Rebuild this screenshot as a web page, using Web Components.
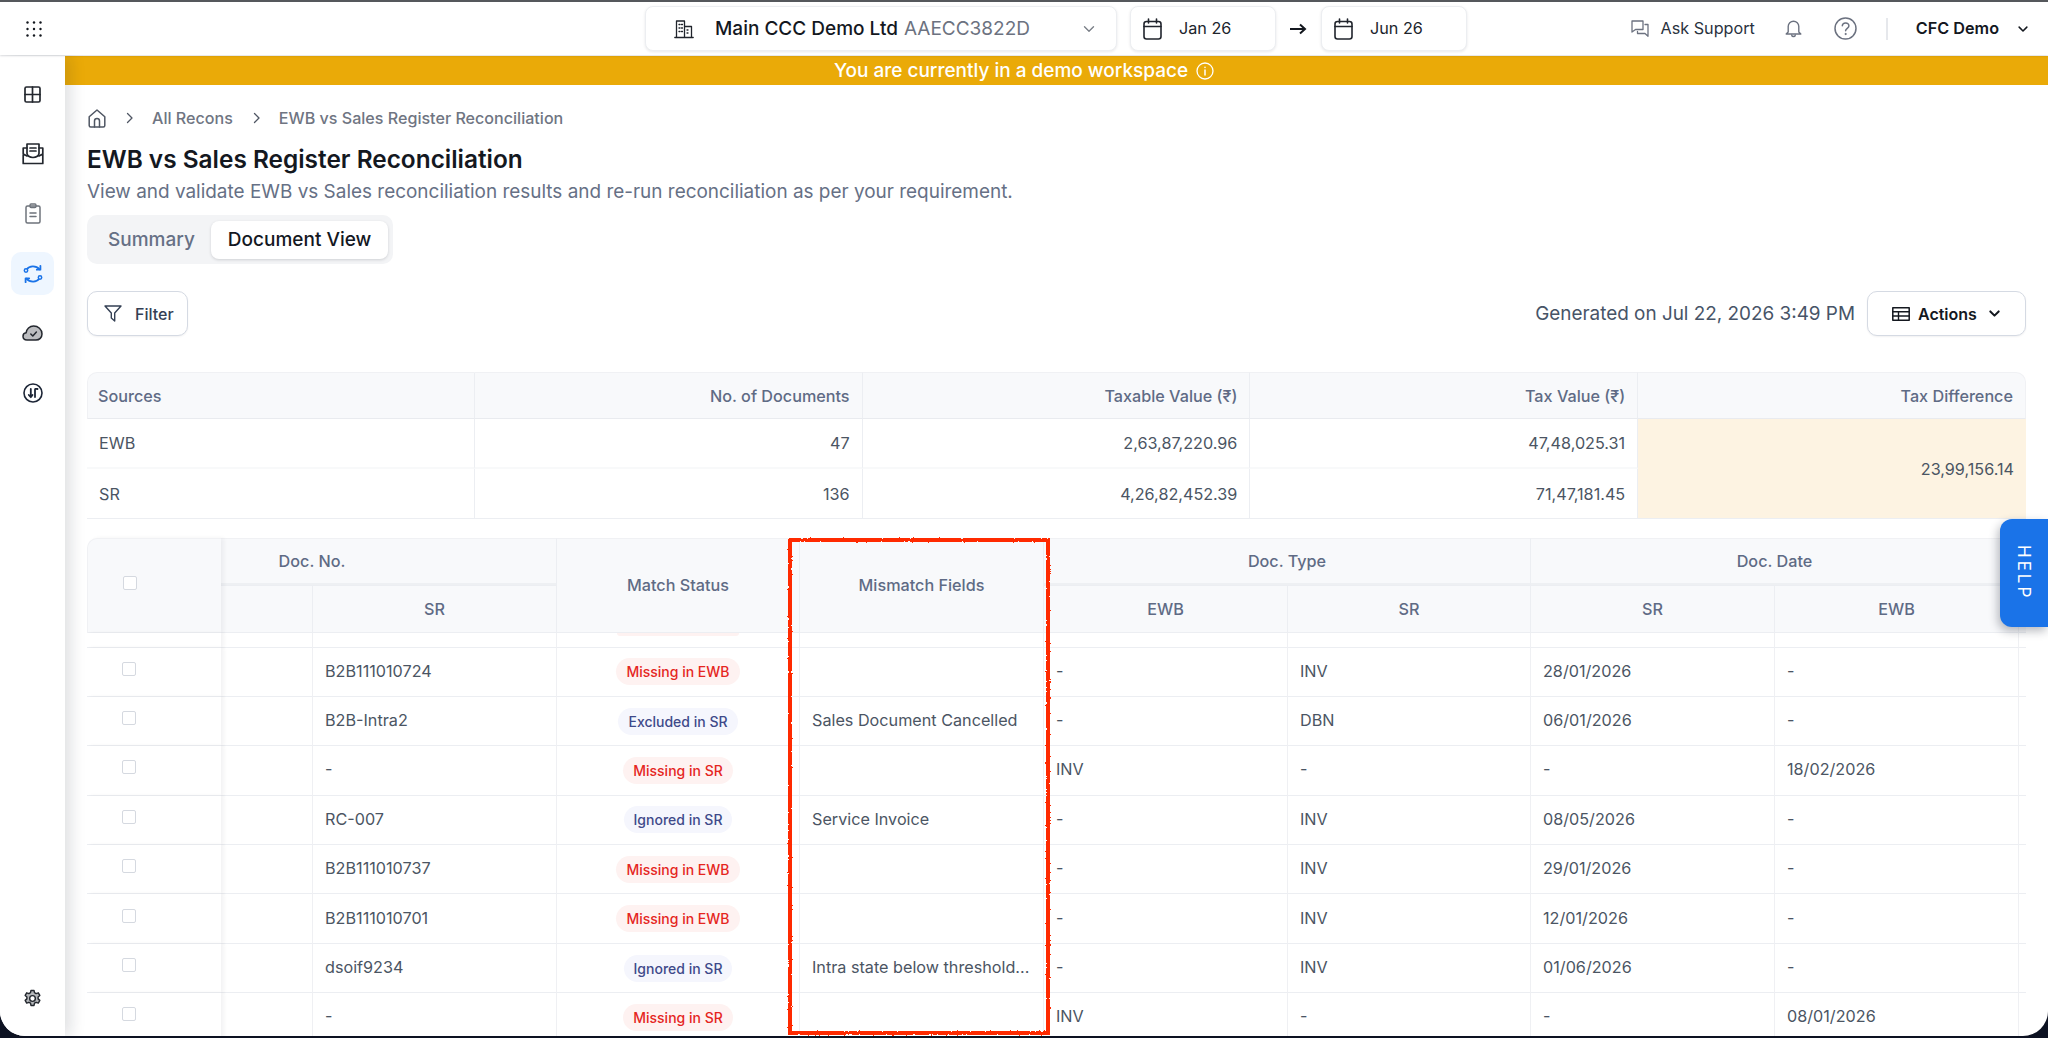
<!DOCTYPE html>
<html>
<head>
<meta charset="utf-8">
<title>EWB vs Sales Register Reconciliation</title>
<style>
  html, body { margin: 0; height: 100%; overflow: hidden; background: #0d1222; }
  body { font-family: Inter, "Liberation Sans", sans-serif; }
</style>
</head>
<body>
<app-shell>
  <top-bar slot="top"></top-bar>
  <side-nav slot="side"></side-nav>
  <demo-banner>You are currently in a demo workspace</demo-banner>
  <page-head></page-head>
  <tool-bar></tool-bar>
  <summary-table></summary-table>
  <recon-table></recon-table>
</app-shell>
<help-tab>HELP</help-tab>
<mark-box></mark-box>

<script>
const svg = (w, h, vb, body) =>
  `<svg width="${w}" height="${h}" viewBox="${vb}" fill="none" stroke="currentColor" stroke-linecap="round" stroke-linejoin="round">${body}</svg>`

const icons = {
  chevron: (w = 14, sw = 1.6) => svg(w, w, '0 0 14 14', `<path d="M2.5 4.8 7 9.3l4.5-4.5" stroke-width="${sw}"/>`),
  calendar: svg(19, 22, '0 0 19 22', '<rect x="1" y="3.5" width="17" height="17.5" rx="2.5" stroke-width="1.6"/><path d="M1 8.5h17M5.5 1v4M13.5 1v4" stroke-width="1.6"/>'),
  building: svg(20, 20, '0 0 20 20', '<path d="M2.5 18V2h8v16M10.5 7.5h7V18M.8 18.5h18.4" stroke-width="1.3"/><path d="M5 5.5h1M7.5 5.5h1M5 9h1M7.5 9h1M5 12.5h1M7.5 12.5h1M13 11h1M13 14h1" stroke-width="1.3"/>'),
  grid: svg(17, 17, '0 0 17 17', '<rect x="1" y="1" width="15" height="15" rx="1.5" stroke-width="1.7"/><path d="M8.500 1v15M1 8.500h15" stroke-width="1.700"/>'),
  inbox: svg(22, 22, '0 0 22 22', '<path d="M5 1h12v9.500c0 2-2.500 4-6 4s-6-2-6-4z" stroke-width="1.700"/><path d="M5 5H1.200v15.500h19.600V5H17M1.200 11 5 13M20.800 11 17 13M8 5h6M8 8h6" stroke-width="1.700"/>'),
  clipboard: svg(16, 21, '0 0 16 21', '<rect x="1" y="3" width="14" height="17" rx="1.500" stroke-width="1.500"/><rect x="5" y="1" width="6" height="3.500" rx="1" stroke-width="1.300"/><path d="M5 10h6M5 13.500h6" stroke-width="1.500"/>'),
  sync: svg(20, 20, '0 0 20 20', '<path d="M3.500 5.500C6.500 1.600 12.800 1.200 16.600 5.400M16.500 14.500C13.500 18.400 7.200 18.800 3.400 14.600" stroke-width="1.800"/><path d="M17.400 1.800v3.900h-3.600M2.600 18.200v-3.900h3.600" stroke-width="1.800"/><circle cx="3" cy="6.500" r="1.700" stroke-width="1.500" fill="#eef6ff"/><circle cx="17" cy="13.500" r="1.700" stroke-width="1.500" fill="#eef6ff"/>'),
  cloud: svg(21, 16, '0 0 21 16', '<path d="M5 15C2.600 15 1 13.400 1 11.300 1 9.400 2.400 8 4.100 7.800 4.500 4 7.600 1 11.600 1c4.500 0 8.400 3.400 8.400 8 0 3.600-2.700 6-6 6z" fill="#bcbdc0" stroke-width="1.500"/><path d="m8.800 9 2 2 3.600-4" stroke-width="1.500"/>'),
  arrowsCircle: svg(20, 20, '0 0 20 20', '<circle cx="10" cy="10" r="9" stroke-width="1.600"/><path d="M7.800 6v8M5.800 12l2 2.200L9.500 12M12 14V6.500c0-.5.500-.8 2.500-.5" stroke-width="1.800"/>'),
  gear: svg(19, 19, '0 0 20 20', '<path d="M8.400 1.500h3.200l.5 2.400 1.700.9 2.300-.8 1.600 2.800-1.800 1.600v2l1.800 1.600-1.600 2.800-2.300-.8-1.700.9-.5 2.400H8.400l-.5-2.400-1.700-.9-2.300.8-1.600-2.800 1.800-1.600v-2L2.300 6.800l1.600-2.800 2.300.8 1.700-.9z" fill="#b5b7ba" stroke-width="1.500"/><circle cx="10" cy="10" r="3" fill="#fff" stroke-width="1.500"/>'),
  chat: svg(18, 17, '0 0 18 17', '<path d="M1 1h11v8.500H4.500L1 12z" stroke-width="1.300"/><path d="M14 4.500h3v11.800l-3-2.800H6.500v-2" stroke-width="1.300"/>'),
  bell: svg(17, 19, '0 0 17 19', '<path d="M3.200 13V7.500a5.300 5.300 0 0 1 10.600 0V13l2 2H1.200zM6.800 16.500c.3 1.300 3.100 1.300 3.400 0" stroke-width="1.400"/>'),
  help: svg(23, 23, '0 0 23 23', '<circle cx="11.500" cy="11.500" r="10.500" stroke-width="1.500"/><path d="M8.300 8.800c.3-4 6.800-3.800 6.600.2-.1 2.300-3.300 2.400-3.300 4.800" stroke-width="1.500"/><circle cx="11.500" cy="17" r=".6" fill="currentColor" stroke-width="1"/>'),
  info: svg(18, 18, '0 0 18 18', '<circle cx="9" cy="9" r="8" stroke-width="1.300"/><path d="M9 8v5M9 5.200v.2" stroke-width="1.500"/>'),
  home: svg(18, 19, '0 0 18 19', '<path d="M1.200 7.800 9 1l7.800 6.800V16.500a1.500 1.500 0 0 1-1.500 1.500H2.700a1.500 1.500 0 0 1-1.500-1.500z" stroke-width="1.500"/><path d="M6.500 18v-6a2.500 2.500 0 0 1 5 0v6" stroke-width="1.500"/>'),
  crumb: svg(8, 12, '0 0 8 12', '<path d="m1.500 1.500 4.500 4.500-4.500 4.500" stroke-width="1.300"/>'),
  filter: svg(18, 17, '0 0 18 17', '<path d="M1 1h16l-6.300 7v8l-3.400-3V8z" stroke-width="1.400"/>'),
  table: svg(18, 14, '0 0 18 14', '<rect x=".8" y=".8" width="16.400" height="12.400" stroke-width="1.500"/><path d="M.8 4.800h16.400M.8 9h16.400M6.500 4.800v8.400" stroke-width="1.400"/>')
}

class AppShell extends HTMLElement {
  constructor() {
    super()
    this.attachShadow({ mode: 'open' }).innerHTML = `
    <style>
      :host {
        display: grid;
        grid-template-columns: 65px 1fr;
        grid-template-rows: 54px 1fr;
        height: 1036px;
        overflow: hidden;
        border-top: 2px solid #55585c;
        box-sizing: border-box;
        background: #fff;
        border-radius: 0 0 25px 25px;
      }
      .top { grid-column: 1 / 3; }
      main { min-width: 0; overflow: hidden; position: relative; }
    </style>
    <div class="top"><slot name="top"></slot></div>
    <slot name="side"></slot>
    <main><slot></slot></main>`
  }
}

class TopBar extends HTMLElement {
  constructor() {
    super()
    let dots = ''
    for (let y = 1.5; y < 16; y += 6.5) for (let x = 1.5; x < 16; x += 6.5) dots += `<circle cx="${x}" cy="${y}" r="1.200"/>`
    this.attachShadow({ mode: 'open' }).innerHTML = `
    <style>
      :host {
        display: flex;
        align-items: center;
        height: 53px;
        background: #fff;
        box-shadow: 0 1px 2px rgba(16, 24, 40, .14);
        position: relative;
        z-index: 3;
        color: #1d2433;
        font-size: 16.200px;
      }
      .apps { width: 16px; margin-left: 26px; display: flex; color: #14181f; }
      .box {
        display: flex; align-items: center;
        height: 45px; box-sizing: border-box;
        border: 1px solid #eceef1; border-radius: 8px;
        box-shadow: 0 1px 3px rgba(16, 24, 40, .1);
        background: #fff; color: #20242c;
      }
      .company { width: 472px; margin-left: 603px; padding: 0 20px 0 28px; }
      .company b { font-weight: 500; font-size: 19px; margin-left: 21px; color: #14181f; }
      .company span { color: #6c7280; font-weight: 400; font-size: 19px; margin-left: 6px; }
      .company i { margin-left: auto; display: flex; color: #7b8088; }
      .date { width: 146px; padding-left: 12px; margin-left: 13px; gap: 17px; }
      .date span, .ask span, .me { margin-top: -1px; }
      .arrow { width: 18px; margin-left: 13px; display: flex; color: #14181f; }
      .date.to { margin-left: 14px; }
      .right { margin-left: auto; display: flex; align-items: center; color: #6c7280; }
      .ask { display: flex; align-items: center; gap: 12px; color: #2a3240; }
      .ask svg { color: #6c7280; }
      .bell { margin-left: 30px; display: flex; }
      .help { margin-left: 32px; display: flex; }
      .sep { width: 2px; height: 22px; background: #e6e8ec; margin-left: 29px; }
      .me { margin-left: 28px; font-weight: 600; color: #14181f; }
      .caret { margin: 0 19px 0 18px; display: flex; color: #14181f; }
    </style>
    <span class="apps"><svg width="16" height="16" viewBox="0 0 16 16" fill="currentColor">${dots}</svg></span>
    <div class="box company">${icons.building}<b>Main CCC Demo Ltd</b><span>AAECC3822D</span><i>${icons.chevron(14, 1.4)}</i></div>
    <div class="box date">${icons.calendar}<span>Jan 26</span></div>
    <span class="arrow"><svg width="18" height="14" viewBox="0 0 18 14" fill="none" stroke="currentColor" stroke-width="2"><path d="M1 7h15M11 2.500 16 7l-5 4.500"/></svg></span>
    <div class="box date to">${icons.calendar}<span>Jun 26</span></div>
    <div class="right">
      <div class="ask">${icons.chat}<span>Ask Support</span></div>
      <span class="bell">${icons.bell}</span>
      <span class="help">${icons.help}</span>
      <span class="sep"></span>
      <span class="me">CFC Demo</span>
      <span class="caret">${icons.chevron(12, 1.8)}</span>
    </div>`
  }
}

class SideNav extends HTMLElement {
  constructor() {
    super()
    const items = [
      ['grid', '#23272e'], ['inbox', '#23272e'], ['clipboard', '#6e737b'],
      ['sync', '#1a73e8', true], ['cloud', '#23272e'], ['arrowsCircle', '#1c2536']
    ]
    this.attachShadow({ mode: 'open' }).innerHTML = `
    <style>
      :host {
        display: flex; flex-direction: column;
        align-items: center;
        gap: 16.700px;
        padding: 17px 0 16px;
        background: #fff;
        box-shadow: 6px 0 14px rgba(16, 24, 40, .13);
        position: relative;
        z-index: 2;
      }
      .item {
        width: 43px; height: 43px; border-radius: 10px;
        display: flex; align-items: center; justify-content: center;
      }
      .on { background: #eef6ff; }
      .gear { margin-top: auto; color: #23272e; }
    </style>
    ${items.map(([name, color, on]) => `<div class="item ${on ? 'on' : ''}" style="color:${color}">${icons[name]}</div>`).join('')}
    <div class="item gear">${icons.gear}</div>`
  }
}

class DemoBanner extends HTMLElement {
  constructor() {
    super()
    this.attachShadow({ mode: 'open' }).innerHTML = `
    <style>
      :host {
        display: flex; align-items: center; justify-content: center; gap: 8px;
        height: 29px;
        padding-right: 65px;
        background: #eaaa08;
        color: #fff;
        font-size: 19px;
        font-weight: 500;
      }
      span { display: flex; }
    </style>
    <slot></slot><span>${icons.info}</span>`
  }
}

class PageHead extends HTMLElement {
  constructor() {
    super()
    this.attachShadow({ mode: 'open' }).innerHTML = `
    <style>
      :host { display: block; padding: 22px 0 0 22px; }
      .crumbs { display: flex; align-items: center; height: 22px; color: #6f7582; font-size: 16.100px; font-weight: 500; }
      .crumbs svg { display: block; }
      .crumbs .sep { margin: 0 18px 0 20px; color: #4f5663; }
      .crumbs .home { color: #4f5663; margin-left: 1px; }
      h1 { margin: 14px 0 0; font-size: 24.400px; line-height: 32px; font-weight: 600; color: #14181f; }
      p { margin: 4px 0 0; font-size: 18.950px; line-height: 26px; color: #667085; }
      .tabs {
        display: inline-flex; align-items: center;
        margin-top: 10px; height: 49px; box-sizing: border-box;
        padding: 0 5px 0 21px;
        background: #f3f4f6; border-radius: 10px;
        font-size: 19px; font-weight: 500;
        color: #667085;
      }
      .tabs b {
        font-weight: 500; color: #14181f; background: #fff;
        height: 38px; display: flex; align-items: center;
        padding: 0 17px; margin-left: 16px;
        border-radius: 8px;
        box-shadow: 0 1px 3px rgba(16, 24, 40, .16);
      }
    </style>
    <div class="crumbs">
      <span class="home">${icons.home}</span>
      <span class="sep">${icons.crumb}</span>All Recons
      <span class="sep">${icons.crumb}</span>EWB vs Sales Register Reconciliation
    </div>
    <h1>EWB vs Sales Register Reconciliation</h1>
    <p>View and validate EWB vs Sales reconciliation results and re-run reconciliation as per your requirement.</p>
    <div class="tabs">Summary<b>Document View</b></div>`
  }
}

class ToolBar extends HTMLElement {
  constructor() {
    super()
    this.attachShadow({ mode: 'open' }).innerHTML = `
    <style>
      :host { display: flex; align-items: center; margin: 27px 22px 0; height: 45px; }
      .btn {
        display: flex; align-items: center; height: 45px; box-sizing: border-box;
        border: 1px solid #d5dae3; border-radius: 10px; background: #fff;
        box-shadow: 0 1px 2px rgba(16, 24, 40, .06);
        font-size: 16px; font-weight: 500; color: #344054;
      }
      .filter { width: 101px; padding-left: 16px; gap: 13px; }
      .gen { margin-left: auto; font-size: 18.900px; color: #475467; }
      .actions { width: 159px; margin-left: 12px; padding-left: 24px; color: #14181f; font-weight: 600; }
      .actions span { margin-left: 8px; }
      .actions i { display: flex; margin-left: 11px; }
    </style>
    <div class="btn filter">${icons.filter}<span>Filter</span></div>
    <span class="gen">Generated on Jul 22, 2026 3:49 PM</span>
    <div class="btn actions">${icons.table}<span>Actions</span><i>${icons.chevron(13, 2.2)}</i></div>`
  }
}

class SummaryTable extends HTMLElement {
  constructor() {
    super()
    const heads = ['Sources', 'No. of Documents', 'Taxable Value (₹)', 'Tax Value (₹)', 'Tax Difference']
    const rows = [
      ['EWB', '47', '2,63,87,220.96', '47,48,025.31'],
      ['SR', '136', '4,26,82,452.39', '71,47,181.45']
    ]
    const last = heads.length - 1
    this.attachShadow({ mode: 'open' }).innerHTML = `
    <style>
      :host {
        display: grid;
        grid-template-columns: repeat(5, 1fr);
        grid-template-rows: 47px 50px 49px;
        margin: 36px 22px 0;
        border-bottom: 1px solid #eceef2;
        font-size: 16.200px;
      }
      .th, .td { display: flex; align-items: center; padding: 0 12px; box-sizing: border-box; border-right: 1px solid #eceef2; }
      .th {
        background: #f8f9fb; color: #5f6b85; font-weight: 500;
        border-top: 1px solid #f0f1f4; border-bottom: 1px solid #e9ebef;
      }
      .first { border-top-left-radius: 10px; border-left: 1px solid #f0f1f4; padding-left: 10px; }
      .last { border-top-right-radius: 10px; border-right: 1px solid #f0f1f4; }
      .r { justify-content: flex-end; }
      .td { color: #4b5563; }
      .diff {
        grid-column: 5; grid-row: 2 / 4;
        display: flex; align-items: center; justify-content: flex-end;
        padding: 0 12px; background: #fdf3e2; color: #4b5563;
      }
      .rowend { border-bottom: 2px solid #f8f9fa; }
    </style>
    ${heads.map((h, i) => `<div class="th ${i ? 'r' : 'first'} ${i === last ? 'last' : ''}">${h}</div>`).join('')}
    ${rows[0].map((t, i) => `<div class="td rowend ${i ? 'r' : ''}">${t}</div>`).join('')}
    <div class="diff">23,99,156.14</div>
    ${rows[1].map((t, i) => `<div class="td ${i ? 'r' : ''}">${t}</div>`).join('')}`
  }
}

class StatusPill extends HTMLElement {
  constructor() {
    super()
    this.attachShadow({ mode: 'open' }).innerHTML = `
    <style>
      :host {
        display: inline-flex; align-items: center;
        height: 27px; padding: 0 10px;
        border-radius: 14px;
        font-size: 14px; font-weight: 500;
        white-space: nowrap;
        background: #fef2f1; color: #e5261f;
      }
      :host([kind="grey"]) { background: #f5f6fd; color: #3f4a8a; }
    </style>
    <slot></slot>`
  }
}

const COLS = '134px 92px 244px 243px 244px 244px 243px 244px 244px 7px'

class ReconTable extends HTMLElement {
  constructor() {
    super()
    const data = [
      ['B2B111010724', 'Missing in EWB', '', '-', 'INV', '28/01/2026', '-'],
      ['B2B-Intra2', 'Excluded in SR', 'Sales Document Cancelled', '-', 'DBN', '06/01/2026', '-'],
      ['-', 'Missing in SR', '', 'INV', '-', '-', '18/02/2026'],
      ['RC-007', 'Ignored in SR', 'Service Invoice', '-', 'INV', '08/05/2026', '-'],
      ['B2B111010737', 'Missing in EWB', '', '-', 'INV', '29/01/2026', '-'],
      ['B2B111010701', 'Missing in EWB', '', '-', 'INV', '12/01/2026', '-'],
      ['dsoif9234', 'Ignored in SR', 'Intra state below threshold...', '-', 'INV', '01/06/2026', '-'],
      ['-', 'Missing in SR', '', 'INV', '-', '-', '08/01/2026']
    ]
    const row = d => {
      const kind = /^Missing/.test(d[1]) ? 'red' : 'grey'
      return `
      <div class="c pin"><span class="check"></span></div>
      <div class="c"></div>
      <div class="c">${d[0]}</div>
      <div class="c mid"><status-pill kind="${kind}">${d[1]}</status-pill></div>
      <div class="c">${d[2]}</div>
      <div class="c">${d[3]}</div>
      <div class="c">${d[4]}</div>
      <div class="c">${d[5]}</div>
      <div class="c">${d[6]}</div>
      <div class="c end"></div>`
    }
    this.attachShadow({ mode: 'open' }).innerHTML = `
    <style>
      :host { display: block; margin: 19px 22px 0; font-size: 16.200px; color: #4b5563; }
      .head, .body, .wrap { display: grid; grid-template-columns: ${COLS}; }
      .head { grid-template-rows: 48px 47px; color: #5f6b85; font-weight: 500; }
      .h {
        display: flex; align-items: center; justify-content: center;
        background: #f8f9fb;
        border-right: 1px solid #eceef2;
        border-bottom: 1px solid #eceef2;
        box-sizing: border-box;
      }
      .top { border-top: 1px solid #f0f1f4; }
      .grp { box-shadow: inset 0 -2px 0 #eef0f3; padding-bottom: 2px; }
      .pin0 {
        grid-column: 1; grid-row: 1 / 3;
        justify-content: flex-start; padding: 0 0 6px 35px;
        border-top-left-radius: 10px; border-left: 1px solid #f0f1f4; border-right: 0;
        box-shadow: 3px 0 4px rgba(16, 24, 40, .05); position: relative; z-index: 1;
      }
      .tall { grid-row: 1 / 3; padding-bottom: 2px; }
      .docno { grid-column: 2 / 4; grid-row: 1; padding-right: 153px; }
      .none { grid-column: 10; grid-row: 1 / 3; background: #f8f9fb; border-bottom: 1px solid #eceef2; }
      .body { grid-auto-rows: 49.400px; }
      .wrap { height: 14.500px; }
      .c {
        display: flex; align-items: center; padding: 0 12px 2px;
        border-right: 1px solid #eff0f3; border-bottom: 1px solid #eceef2;
        white-space: nowrap; overflow: hidden; box-sizing: border-box;
      }
      .wrap .c { padding: 0; }
      .mid { justify-content: center; padding-bottom: 0; }
      .pin {
        padding: 0 0 6px 35px;
        box-shadow: 3px 0 4px rgba(16, 24, 40, .05); position: relative; z-index: 1;
        background: #fff; border-right: 0;
      }
      .end { border-right: 0; padding: 0; }
      .check {
        display: block; width: 14px; height: 14px; box-sizing: border-box;
        border: 1.500px solid #d5d9e0; border-radius: 2px; background: #fff;
      }
      .tip { justify-content: center; align-items: flex-start; }
      .tip i { display: block; width: 122px; height: 3px; background: #fef2f1; border-radius: 0 0 14px 14px; }
    </style>
    <div class="head">
      <div class="h top pin0"><span class="check"></span></div>
      <div class="h top grp docno">Doc. No.</div>
      <div class="h top tall" style="grid-column:4">Match Status</div>
      <div class="h top tall" style="grid-column:5">Mismatch Fields</div>
      <div class="h top grp" style="grid-column:6 / 8;grid-row:1">Doc. Type</div>
      <div class="h top grp" style="grid-column:8 / 10;grid-row:1">Doc. Date</div>
      <div class="none"></div>
      <div class="h" style="grid-column:2;grid-row:2"></div>
      <div class="h" style="grid-column:3;grid-row:2">SR</div>
      <div class="h" style="grid-column:6;grid-row:2">EWB</div>
      <div class="h" style="grid-column:7;grid-row:2">SR</div>
      <div class="h" style="grid-column:8;grid-row:2">SR</div>
      <div class="h" style="grid-column:9;grid-row:2">EWB</div>
    </div>
    <div class="wrap">
      <div class="c pin"></div><div class="c"></div><div class="c"></div>
      <div class="c tip"><i></i></div>
      <div class="c"></div><div class="c"></div><div class="c"></div><div class="c"></div><div class="c"></div><div class="c end"></div>
    </div>
    <div class="body">${data.map(row).join('')}</div>`
  }
}

class HelpTab extends HTMLElement {
  constructor() {
    super()
    this.attachShadow({ mode: 'open' }).innerHTML = `
    <style>
      :host {
        position: absolute; top: 519px; right: 0;
        width: 48px; height: 108px;
        display: flex; align-items: center; justify-content: center;
        background: #1a73e8; color: #fff;
        border-radius: 12px 0 0 12px;
        box-shadow: -2px 4px 10px rgba(16, 24, 40, .3);
        font-size: 17px; letter-spacing: 3px;
        writing-mode: vertical-rl;
        z-index: 5;
      }
    </style>
    <slot></slot>`
  }
}

// hand drawn annotation box, the filter roughens its edge
class MarkBox extends HTMLElement {
  constructor() {
    super()
    this.attachShadow({ mode: 'open' }).innerHTML = `
    <style>
      :host { position: absolute; left: 788px; top: 538px; width: 262px; height: 497px; z-index: 4; }
      svg { display: block; overflow: visible; }
    </style>
    <svg width="262" height="497" viewBox="0 0 262 497">
      <filter id="rough" x="-5%" y="-5%" width="110%" height="110%">
        <feTurbulence type="fractalNoise" baseFrequency=".45" numOctaves="2" seed="4"/>
        <feDisplacementMap in="SourceGraphic" scale="2.500"/>
      </filter>
      <rect x="2" y="2" width="258" height="493" fill="none" stroke="#ff2a00" stroke-width="4" filter="url(#rough)"/>
    </svg>`
  }
}

customElements.define('app-shell', AppShell)
customElements.define('top-bar', TopBar)
customElements.define('side-nav', SideNav)
customElements.define('demo-banner', DemoBanner)
customElements.define('page-head', PageHead)
customElements.define('tool-bar', ToolBar)
customElements.define('summary-table', SummaryTable)
customElements.define('status-pill', StatusPill)
customElements.define('recon-table', ReconTable)
customElements.define('help-tab', HelpTab)
customElements.define('mark-box', MarkBox)
</script>
</body>
</html>
